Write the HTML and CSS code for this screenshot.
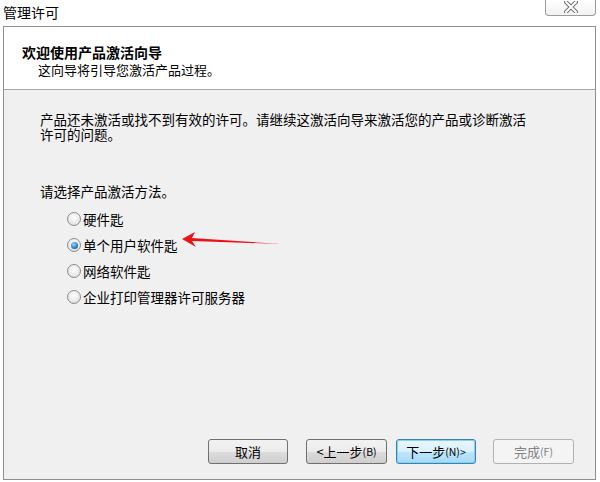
FILE: index.html
```html
<!DOCTYPE html>
<html>
<head>
  <meta charset="UTF-8">
  <title>管理许可</title>
  <link rel="stylesheet" href="styles.css">
</head>
<body>
  <div class="titlebar">
    <span class="title">管理许可</span>
    <div class="close">
      <svg width="14" height="12" viewBox="0 0 14 12">
        <path d="M2 1 L12 11 M12 1 L2 11" stroke="#6f6f6f" stroke-width="4" stroke-linecap="round"/>
        <path d="M2 1 L12 11 M12 1 L2 11" stroke="#ffffff" stroke-width="2" stroke-linecap="round"/>
      </svg>
    </div>
  </div>

  <div class="window">
    <div class="header">
      <div class="heading">欢迎使用产品激活向导</div>
      <div class="subheading">这向导将引导您激活产品过程。</div>
    </div>

    <div class="content">
      <div class="intro">
        <div class="line">产品还未激活或找不到有效的许可。请继续这激活向导来激活您的产品或诊断激活</div>
        <div class="line">许可的问题。</div>
      </div>
      <p class="prompt">请选择产品激活方法。</p>
      <ul class="options">
        <li><span class="radio"></span>硬件匙</li>
        <li><span class="radio checked"></span>单个用户软件匙</li>
        <li><span class="radio"></span>网络软件匙</li>
        <li><span class="radio"></span>企业打印管理器许可服务器</li>
      </ul>

      <div class="buttons">
        <div class="btn cancel">取消</div>
        <div class="btn back">&lt;上一步<span class="key">(B)</span></div>
        <div class="btn next default">下一步<span class="key">(N)&gt;</span></div>
        <div class="btn finish disabled">完成<span class="key">(F)</span></div>
      </div>
    </div>
  </div>

  <!-- red pointer drawn over the dialog -->
  <svg class="arrow" width="110" height="20" viewBox="0 0 110 20">
    <polygon points="2,9 15,2 12,8 100,14 12,11 16,17" fill="#e8141a"/>
  </svg>
</body>
</html>
```

FILE: styles.css
```css
body {
  margin: 0;
  width: 600px;
  height: 482px;
  background: #ffffff;
  font-family: "Noto Sans CJK SC", "Microsoft YaHei", sans-serif;
  font-size: 13.5px;
  color: #000;
  position: relative;
  overflow: hidden;
}

.titlebar {
  height: 26px;
  display: flex;
  align-items: flex-start;
}
.title {
  padding: 3px 0 0 3px;
  font-size: 14px;
  line-height: 18px;
}
.close {
  margin-left: auto;
  margin-right: 4px;
  width: 51px;
  height: 16px;
  box-sizing: border-box;
  border: 1px solid #9a9a9a;
  border-top: none;
  border-radius: 0 0 4px 4px;
  background: linear-gradient(#ffffff, #f2f2f2);
  display: flex;
  justify-content: center;
  align-items: flex-start;
  padding-top: 1px;
}

.window {
  margin: 0 4px 0 3px;
  height: 454px;
  box-sizing: border-box;
  border: 1px solid #8e8e8e;
  display: flex;
  flex-direction: column;
}

.header {
  height: 63px;
  box-sizing: border-box;
  background: #ffffff;
  border-bottom: 1px solid #a6a6a6;
  padding: 16px 0 0 18px;
}
.heading {
  font-weight: bold;
  font-size: 14px;
  line-height: 18px;
}
.subheading {
  margin-left: 16px;
  font-size: 13px;
  line-height: 17px;
}

.content {
  flex: 1;
  background: #f0f0f0;
  padding: 21px 21px 15px 36px;
  display: flex;
  flex-direction: column;
}
.intro .line {
  height: 15px;
  line-height: 16px;
}
.prompt {
  margin: 42px 0 0 0;
  line-height: 16px;
}

.options {
  list-style: none;
  margin: 7px 0 0 0;
  padding: 0 0 0 27px;
}
.options li {
  height: 26px;
  display: flex;
  align-items: center;
  gap: 2px;
}
.radio {
  width: 14px;
  height: 14px;
  box-sizing: border-box;
  border-radius: 50%;
  border: 1px solid #8d8d8d;
  background: radial-gradient(circle at 50% 40%, #ffffff 0%, #eaeaea 55%, #cfcfcf 100%);
  display: flex;
  justify-content: center;
  align-items: center;
}
.radio.checked::after {
  content: "";
  width: 7px;
  height: 7px;
  border-radius: 50%;
  background: radial-gradient(circle at 40% 35%, #9edcff 0%, #2a83c6 55%, #0e4d80 100%);
}

.buttons {
  margin-top: auto;
  display: flex;
  justify-content: flex-end;
}
.btn {
  width: 80px;
  height: 25px;
  box-sizing: border-box;
  border: 1px solid #707070;
  border-radius: 3px;
  background: linear-gradient(#f2f2f2 0%, #ebebeb 50%, #dddddd 50%, #cfcfcf 100%);
  display: flex;
  justify-content: center;
  align-items: center;
  font-size: 13px;
  line-height: 16px;
}
.btn .key {
  font-size: 10.5px;
}
.cancel {
  margin-right: 18px;
}
.back {
  width: 81px;
  margin-right: 9px;
}
.next {
  margin-right: 17px;
}
.default {
  border-color: #3c7fb1;
  background: linear-gradient(#eaf6fd 0%, #d9f0fc 50%, #bee6fd 50%, #a7d9f5 100%);
  box-shadow: inset 0 0 0 1px #7fd3f7;
}
.finish {
  width: 81px;
}
.disabled {
  border-color: #adb2b5;
  background: #f4f4f4;
  color: #838383;
}

.arrow {
  position: absolute;
  left: 180px;
  top: 230px;
}
```
